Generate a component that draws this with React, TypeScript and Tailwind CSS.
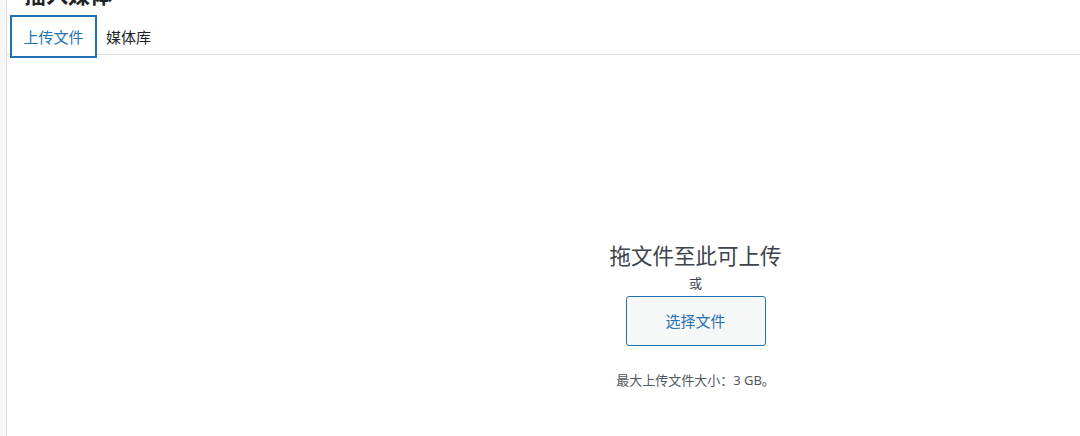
import React from "react";

export default function App() {
  return (
    <div
      className="flex h-[436px] w-[1080px] overflow-hidden bg-white text-[#1d2327]"
      style={{ fontFamily: '"Noto Sans", "Noto Sans CJK SC", sans-serif' }}
    >
      <div className="w-[7px] shrink-0 border-r border-[#dcdcde] bg-[#f6f7f7]" />
      <div className="flex min-w-0 flex-1 flex-col">
        <h1 className="-mt-[17px] ml-[17px] h-[22px] text-[22px] font-semibold leading-[22px] text-[#1d2327]">
          插入媒体
        </h1>
        <div className="mt-[10px] flex h-[40px] items-start border-b border-[#dcdcde]">
          <button className="ml-[3px] h-[43px] w-[87px] shrink-0 border-2 border-[#2271b1] bg-white text-[15px] leading-[20px] text-[#2271b1]">
            上传文件
          </button>
          <button className="ml-[9px] h-[43px] text-[15px] leading-[20px] text-[#1d2327]">
            媒体库
          </button>
        </div>
        <div className="flex flex-col items-center pl-[304px] pt-[186px]">
          <h2 className="h-[30px] text-[21.5px] leading-[30px] text-[#3c434a]">
            拖文件至此可上传
          </h2>
          <p className="mt-[3px] h-[18px] text-[13px] leading-[18px] text-[#3c434a]">或</p>
          <button className="mt-[4px] h-[50px] w-[140px] rounded-[3px] border border-[#2271b1] bg-[#f6f7f7] text-[15px] text-[#2271b1]">
            选择文件
          </button>
          <p className="mt-[25px] h-[18px] text-[13px] leading-[18px] text-[#50575e]">
            最大上传文件大小：3 GB。
          </p>
        </div>
      </div>
    </div>
  );
}
